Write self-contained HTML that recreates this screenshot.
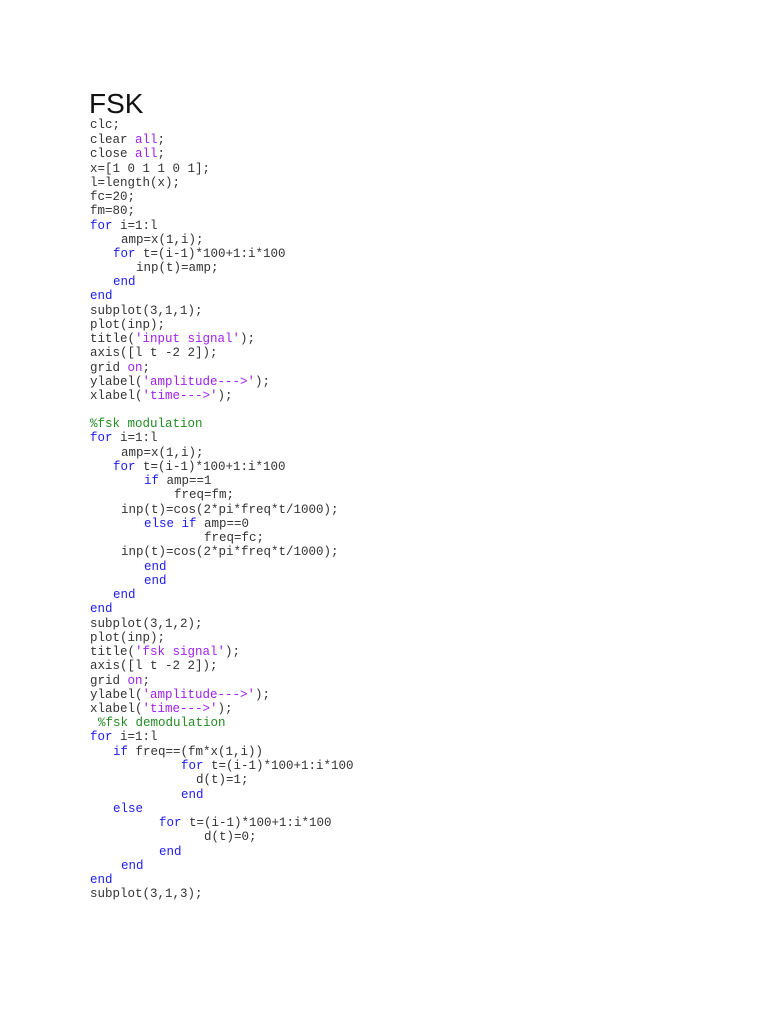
<!DOCTYPE html>
<html><head><meta charset="utf-8"><style>
html,body{margin:0;padding:0;background:#fff;width:768px;height:1024px;overflow:hidden;position:relative}
.h{position:absolute;left:89px;top:86px;font:28px "Liberation Sans",sans-serif;color:#111;line-height:36px}
.l{position:absolute;font:12.5px "Liberation Mono",monospace;color:#333;line-height:14px;white-space:pre}
.k{color:#1c1cf0}.s{color:#a020f0}.c{color:#228b22}
</style></head><body>
<div class="h">FSK</div>
<div class="l" style="left:90px;top:118px">clc;</div>
<div class="l" style="left:90px;top:133px">clear <span class="s">all</span>;</div>
<div class="l" style="left:90px;top:147px">close <span class="s">all</span>;</div>
<div class="l" style="left:90px;top:162px">x=[1 0 1 1 0 1];</div>
<div class="l" style="left:90px;top:176px">l=length(x);</div>
<div class="l" style="left:90px;top:190px">fc=20;</div>
<div class="l" style="left:90px;top:204px">fm=80;</div>
<div class="l" style="left:90px;top:219px"><span class="k">for</span> i=1:l</div>
<div class="l" style="left:121px;top:233px">amp=x(1,i);</div>
<div class="l" style="left:113px;top:247px"><span class="k">for</span> t=(i-1)*100+1:i*100</div>
<div class="l" style="left:136px;top:261px">inp(t)=amp;</div>
<div class="l" style="left:113px;top:275px"><span class="k">end</span></div>
<div class="l" style="left:90px;top:289px"><span class="k">end</span></div>
<div class="l" style="left:90px;top:304px">subplot(3,1,1);</div>
<div class="l" style="left:90px;top:318px">plot(inp);</div>
<div class="l" style="left:90px;top:332px">title(<span class="s">'input signal'</span>);</div>
<div class="l" style="left:90px;top:346px">axis([l t -2 2]);</div>
<div class="l" style="left:90px;top:361px">grid <span class="s">on</span>;</div>
<div class="l" style="left:90px;top:375px">ylabel(<span class="s">'amplitude---&gt;'</span>);</div>
<div class="l" style="left:90px;top:389px">xlabel(<span class="s">'time---&gt;'</span>);</div>
<div class="l" style="left:90px;top:417px"><span class="c">%fsk modulation</span></div>
<div class="l" style="left:90px;top:431px"><span class="k">for</span> i=1:l</div>
<div class="l" style="left:121px;top:446px">amp=x(1,i);</div>
<div class="l" style="left:113px;top:460px"><span class="k">for</span> t=(i-1)*100+1:i*100</div>
<div class="l" style="left:144px;top:474px"><span class="k">if</span> amp==1</div>
<div class="l" style="left:174px;top:488px">freq=fm;</div>
<div class="l" style="left:121px;top:503px">inp(t)=cos(2*pi*freq*t/1000);</div>
<div class="l" style="left:144px;top:517px"><span class="k">else if</span> amp==0</div>
<div class="l" style="left:204px;top:531px">freq=fc;</div>
<div class="l" style="left:121px;top:545px">inp(t)=cos(2*pi*freq*t/1000);</div>
<div class="l" style="left:144px;top:560px"><span class="k">end</span></div>
<div class="l" style="left:144px;top:574px"><span class="k">end</span></div>
<div class="l" style="left:113px;top:588px"><span class="k">end</span></div>
<div class="l" style="left:90px;top:602px"><span class="k">end</span></div>
<div class="l" style="left:90px;top:617px">subplot(3,1,2);</div>
<div class="l" style="left:90px;top:631px">plot(inp);</div>
<div class="l" style="left:90px;top:645px">title(<span class="s">'fsk signal'</span>);</div>
<div class="l" style="left:90px;top:659px">axis([l t -2 2]);</div>
<div class="l" style="left:90px;top:674px">grid <span class="s">on</span>;</div>
<div class="l" style="left:90px;top:688px">ylabel(<span class="s">'amplitude---&gt;'</span>);</div>
<div class="l" style="left:90px;top:702px">xlabel(<span class="s">'time---&gt;'</span>);</div>
<div class="l" style="left:98px;top:716px"><span class="c">%fsk demodulation</span></div>
<div class="l" style="left:90px;top:730px"><span class="k">for</span> i=1:l</div>
<div class="l" style="left:113px;top:745px"><span class="k">if</span> freq==(fm*x(1,i))</div>
<div class="l" style="left:181px;top:759px"><span class="k">for</span> t=(i-1)*100+1:i*100</div>
<div class="l" style="left:196px;top:773px">d(t)=1;</div>
<div class="l" style="left:181px;top:788px"><span class="k">end</span></div>
<div class="l" style="left:113px;top:802px"><span class="k">else</span></div>
<div class="l" style="left:159px;top:816px"><span class="k">for</span> t=(i-1)*100+1:i*100</div>
<div class="l" style="left:204px;top:830px">d(t)=0;</div>
<div class="l" style="left:159px;top:845px"><span class="k">end</span></div>
<div class="l" style="left:121px;top:859px"><span class="k">end</span></div>
<div class="l" style="left:90px;top:873px"><span class="k">end</span></div>
<div class="l" style="left:90px;top:887px">subplot(3,1,3);</div>
</body></html>
